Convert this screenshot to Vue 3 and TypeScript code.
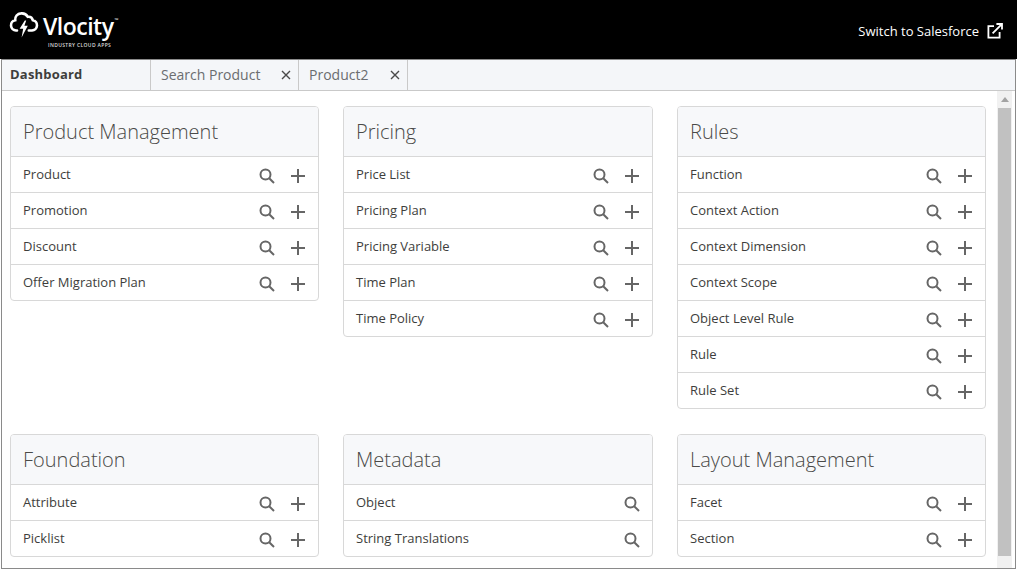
<script setup lang="ts">
interface Card {
  title: string
  items: string[]
  noAdd?: boolean
}

const cards: Card[] = [
  { title: 'Product Management', items: ['Product', 'Promotion', 'Discount', 'Offer Migration Plan'] },
  { title: 'Pricing', items: ['Price List', 'Pricing Plan', 'Pricing Variable', 'Time Plan', 'Time Policy'] },
  {
    title: 'Rules',
    items: ['Function', 'Context Action', 'Context Dimension', 'Context Scope', 'Object Level Rule', 'Rule', 'Rule Set'],
  },
  { title: 'Foundation', items: ['Attribute', 'Picklist'] },
  { title: 'Metadata', items: ['Object', 'String Translations'], noAdd: true },
  { title: 'Layout Management', items: ['Facet', 'Section'] },
]
</script>

<template>
  <div class="app">
    <header class="topbar">
      <div class="logo">
        <svg class="logo-cloud" viewBox="0 0 30 30" fill="none">
          <path
            d="M8 21.5H7a5.2 5.2 0 0 1-.8-10.3A6 6 0 0 1 12 4.4a7 7 0 0 1 6.8 3.4A4.6 4.6 0 0 1 23.8 11.2a5.2 5.2 0 0 1-.8 10.3h-3.2"
            stroke="#fff"
            stroke-width="2.6"
            stroke-linecap="round"
          />
          <path d="M15.8 11.5 10.6 19.8h3.6L12.6 28.5 18.8 16.8h-3.4l1.8-5.3z" fill="#fff" />
        </svg>
        <div class="logo-text">
          <div class="logo-name">Vlocity<span class="logo-tm">™</span></div>
          <div class="logo-tag">INDUSTRY CLOUD APPS</div>
        </div>
      </div>
      <a class="switch">
        Switch to Salesforce
        <svg class="switch-icon" viewBox="0 0 16 16" fill="none" stroke="#fff" stroke-width="1.8">
          <path d="M7 3.2H1.4v11.4h11.2V9" />
          <path d="M5.6 10.4 14.6 1.4M9.4 1h5.6v5.6" />
        </svg>
      </a>
    </header>

    <div class="frame">
      <nav class="tabs">
        <div class="tab tab-home"><span class="tab-label">Dashboard</span></div>
        <div class="tab tab-search">
          <span class="tab-label">Search Product</span>
          <svg class="tab-close" viewBox="0 0 10 10"><path d="M1 1l8 8M9 1l-8 8" /></svg>
        </div>
        <div class="tab tab-product">
          <span class="tab-label">Product2</span>
          <svg class="tab-close" viewBox="0 0 10 10"><path d="M1 1l8 8M9 1l-8 8" /></svg>
        </div>
      </nav>

      <div class="body">
        <main class="grid">
          <section v-for="card in cards" :key="card.title" class="card">
            <h2 class="card-title">{{ card.title }}</h2>
            <div v-for="item in card.items" :key="item" class="row">
              <span class="row-label">{{ item }}</span>
              <svg class="icon icon-search" viewBox="0 0 16 16" fill="none">
                <circle cx="6.5" cy="6.5" r="5" />
                <path d="M10.2 10.2 15 15" />
              </svg>
              <svg v-if="!card.noAdd" class="icon icon-add" viewBox="0 0 16 16" fill="none">
                <path d="M8 1v14M1 8h14" />
              </svg>
            </div>
          </section>
        </main>

        <div class="scrollbar">
          <div class="scroll-arrow"></div>
          <div class="scroll-thumb"></div>
        </div>
      </div>
    </div>
  </div>
</template>

<style>
html,
body {
  margin: 0;
  background: #fff;
  overflow: hidden;
}
</style>

<style scoped>
.app {
  width: 1017px;
  height: 569px;
  display: flex;
  flex-direction: column;
  font-family: "Open Sans", "Liberation Sans", sans-serif;
  color: #3e3e3c;
  overflow: hidden;
}

.topbar {
  height: 59px;
  flex-shrink: 0;
  background: #000;
  display: flex;
  align-items: center;
  justify-content: space-between;
  padding: 0 14px 0 9px;
}

.logo {
  display: flex;
  align-items: flex-start;
  gap: 4px;
  margin-top: -4px;
}

.logo-cloud {
  width: 30px;
  height: 30px;
  margin-top: 3px;
}

.logo-text {
  display: flex;
  flex-direction: column;
  align-items: flex-start;
}

.logo-name {
  font-size: 23px;
  line-height: 28px;
  font-weight: 600;
  color: #fff;
  letter-spacing: -0.5px;
}

.logo-tm {
  font-size: 5px;
  vertical-align: 13px;
  margin-left: 1px;
  letter-spacing: 0;
}

.logo-tag {
  font-size: 5px;
  line-height: 7px;
  font-weight: 600;
  color: #dcdcdc;
  letter-spacing: 0.35px;
  margin-top: 2px;
  margin-left: 5px;
}

.switch {
  display: flex;
  align-items: center;
  gap: 8px;
  font-size: 13px;
  color: #fff;
  margin-top: 2px;
}

.switch-icon {
  width: 16px;
  height: 16px;
}

.frame {
  flex: 1;
  min-height: 0;
  margin: 0 1px 0 1px;
  border: 1px solid #8a8a8a;
  display: flex;
  flex-direction: column;
}

.tabs {
  height: 31px;
  box-sizing: border-box;
  flex-shrink: 0;
  display: flex;
  background: #f4f6f9;
  border-bottom: 1px solid #c9c9c9;
}

.tab {
  display: flex;
  align-items: center;
  font-size: 14px;
  color: #6b6d70;
  border-right: 1px solid #c9c9c9;
  padding-left: 10px;
  box-sizing: border-box;
}

.tab-label {
  margin-top: -2px;
}

.tab-home {
  width: 149px;
  padding-left: 8px;
  font-size: 13px;
  font-weight: 700;
  letter-spacing: 0.2px;
  color: #3e3e3c;
}

.tab-search {
  width: 148px;
  justify-content: space-between;
  padding-right: 7px;
}

.tab-product {
  width: 109px;
  justify-content: space-between;
  padding-right: 7px;
}

.tab-close {
  width: 10px;
  height: 10px;
  stroke: #4a4a4a;
  stroke-width: 1.4;
  fill: none;
}

.body {
  flex: 1;
  min-height: 0;
  display: flex;
  padding-right: 3px;
  overflow: hidden;
}

.grid {
  flex: 1;
  display: grid;
  grid-template-columns: 309px 310px 309px;
  grid-template-rows: 303px auto;
  column-gap: 24px;
  row-gap: 25px;
  align-items: start;
  padding: 15px 0 0 8px;
  box-sizing: border-box;
}

.card {
  border: 1px solid #d8d8d8;
  border-radius: 4px;
  overflow: hidden;
  background: #fff;
}

.card-title {
  height: 50px;
  margin: 0;
  padding: 0 12px 1px;
  box-sizing: border-box;
  display: flex;
  align-items: center;
  font-size: 20px;
  font-weight: 300;
  color: #4a4a48;
  background: #f7f8fa;
  border-bottom: 1px solid #d8d8d8;
}

.row {
  height: 36px;
  box-sizing: border-box;
  display: flex;
  align-items: center;
  padding: 0 12px;
  font-size: 13px;
  color: #3e3e3c;
  border-bottom: 1px solid #d8d8d8;
}

.row:last-child {
  height: 35px;
  border-bottom: none;
}

.row-label {
  flex: 1;
  margin-top: -1px;
}

.icon {
  width: 16px;
  height: 16px;
  margin-top: 2px;
  stroke: #666;
  stroke-width: 2;
}

.icon-add {
  margin-left: 15px;
}

.scrollbar {
  width: 15px;
  flex-shrink: 0;
  background: #f1f1f1;
  display: flex;
  flex-direction: column;
  align-items: stretch;
  padding: 0 1px 12px;
  box-sizing: border-box;
}

.scroll-arrow {
  align-self: center;
  width: 0;
  height: 0;
  margin: 6px 0 6px;
  border-left: 4px solid transparent;
  border-right: 4px solid transparent;
  border-bottom: 5px solid #a3a3a3;
}

.scroll-thumb {
  flex: 1;
  background: #c1c1c1;
}
</style>
